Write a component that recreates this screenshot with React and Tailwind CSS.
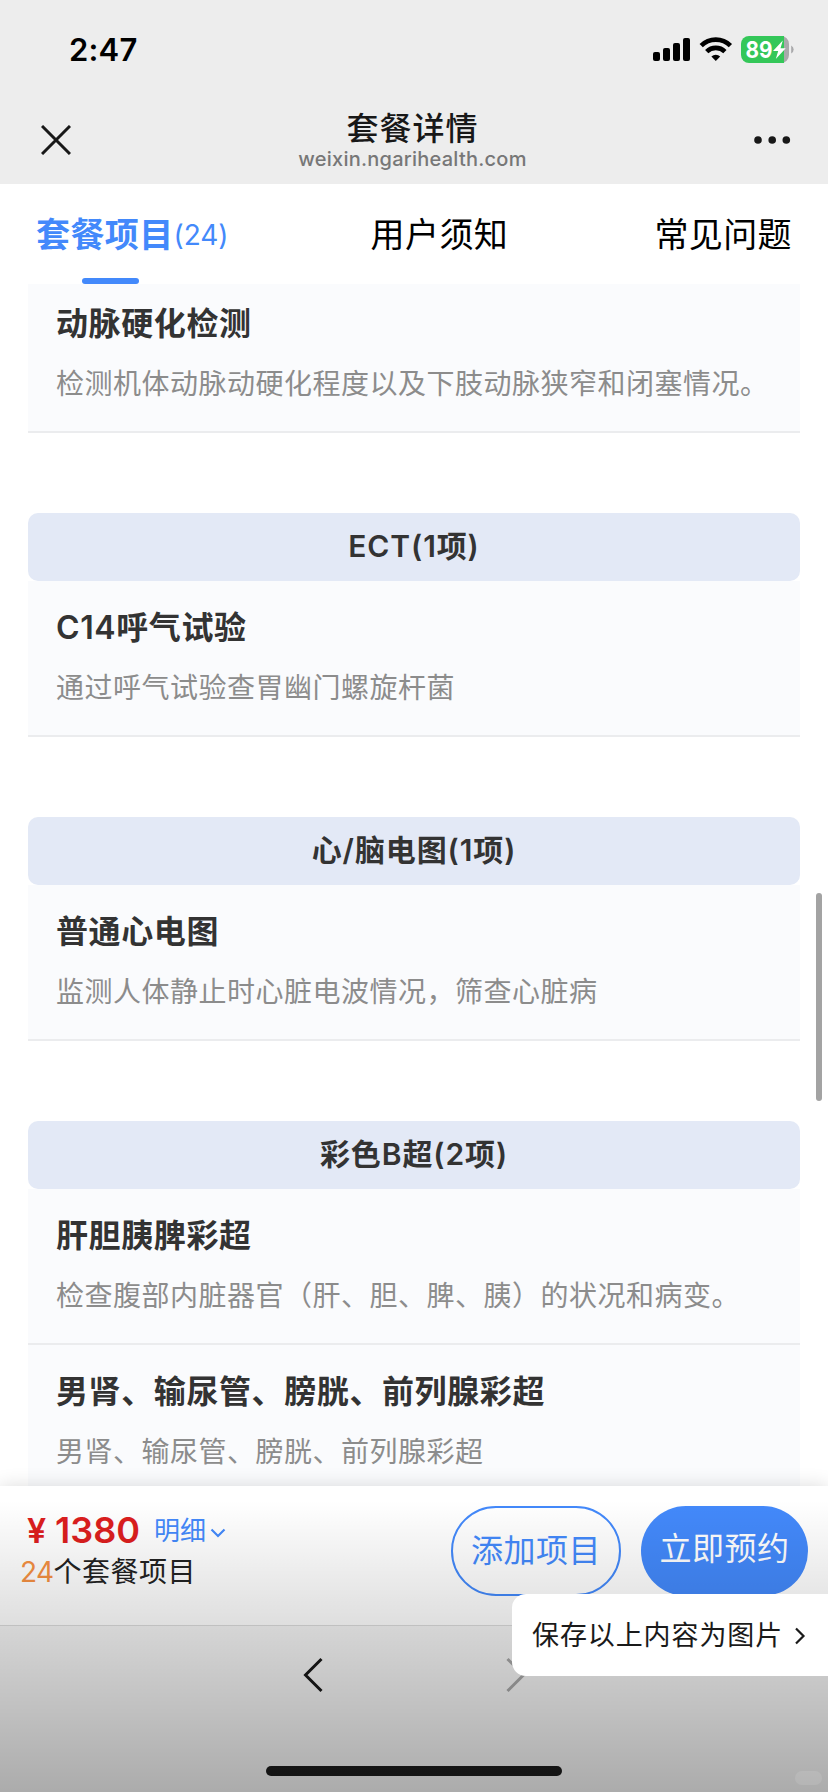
import { clsx } from 'clsx'

const sections = [
  { title: null, items: [{ name: '动脉硬化检测', desc: '检测机体动脉动硬化程度以及下肢动脉狭窄和闭塞情况。' }] },
  { title: 'ECT(1项)', items: [{ name: 'C14呼气试验', desc: '通过呼气试验查胃幽门螺旋杆菌' }] },
  { title: '心/脑电图(1项)', items: [{ name: '普通心电图', desc: '监测人体静止时心脏电波情况，筛查心脏病' }] },
  {
    title: '彩色B超(2项)',
    items: [
      { name: '肝胆胰脾彩超', desc: '检查腹部内脏器官（肝、胆、脾、胰）的状况和病变。' },
      { name: '男肾、输尿管、膀胱、前列腺彩超', desc: '男肾、输尿管、膀胱、前列腺彩超' },
    ],
  },
]

function StatusIcons() {
  return (
    <svg width="142" height="28" viewBox="0 0 142 28" className="shrink-0">
      {/* signal */}
      <rect x="0" y="16" width="7" height="9" rx="2" />
      <rect x="10" y="12" width="7" height="13" rx="2" />
      <rect x="20" y="7" width="7" height="18" rx="2" />
      <rect x="30" y="2" width="7" height="23" rx="2" />
      {/* wifi */}
      <g fill="none" stroke="#000" strokeWidth="4.6">
        <path d="M48.2 9.7a20.5 20.5 0 0 1 29.2 0" />
        <path d="M53.7 15.6a13 13 0 0 1 18.2 0" />
      </g>
      <path d="M62.8 25l-4.4-4.4a6.4 6.4 0 0 1 8.8 0z" />
      {/* battery */}
      <path d="M96 0h32a8 8 0 0 1 8 8v11a8 8 0 0 1-8 8h-5V0z" fill="#a9a9ab" />
      <path d="M96 0h35v27H96a8 8 0 0 1-8-8V8a8 8 0 0 1 8-8z" fill="#34c759" />
      <path d="M138.2 9.5a4.500 4.500 0 0 1 0 8z" fill="#a9a9ab" />
      <text x="92.5" y="22" fill="#fff" fontSize="23" fontWeight="700" fontFamily="Inter, sans-serif" textLength="27" lengthAdjust="spacingAndGlyphs">89</text>
      <path d="M129.8 4.500l-9.800 10.500h5.200l-2.400 8 9.900-10.800h-5.200z" fill="#fff" />
    </svg>
  )
}

function Tab({ label, active, count }) {
  return (
    <div className={clsx('flex items-center text-[34px] tracking-[0.4px] leading-[100px]', active ? 'text-[#4389fb] font-bold' : 'text-black')}>
      {label}
      {count && <span className="text-[28px] font-normal tracking-[-0.1px]">({count})</span>}
    </div>
  )
}

function Item({ name, desc }) {
  return (
    <div className="h-[156px] bg-[#fafbfd] border-b-2 border-[#ebecee] px-7 pt-[27px] whitespace-nowrap">
      <div className="text-[32px] leading-10 tracking-[0.6px] font-semibold text-[#333]">{name}</div>
      <div className="mt-5 text-[28px] leading-10 tracking-[0.5px] text-[#8c8c8c]">{desc}</div>
    </div>
  )
}

export default function App() {
  return (
    <div className="relative w-[828px] h-[1792px] overflow-hidden flex flex-col bg-white font-['Inter','Noto_Sans_CJK_SC',sans-serif]">
      {/* Status bar + nav */}
      <header className="h-[184px] shrink-0 bg-[#ededed]">
        <div className="h-[100px] flex items-center justify-between pl-[69px] pr-[33px]">
          <span className="text-[31px] tracking-[0.2px] font-semibold text-black">2:47</span>
          <StatusIcons />
        </div>
        <div className="h-[84px] flex items-start justify-between pl-[41px] pr-[37px]">
          <svg width="30" height="30" viewBox="0 0 30 30" className="mt-[25px]" stroke="#181818" strokeWidth="3">
            <path d="M1 1l28 28M29 1L1 29" />
          </svg>
          <div className="flex flex-col items-center pt-[9px]">
            <div className="text-[32px] leading-10 tracking-[1px] font-medium text-[#181818]">套餐详情</div>
            <div className="-mt-0.5 text-[20px] leading-6 tracking-[0.24px] font-medium text-[#777]">weixin.ngarihealth.com</div>
          </div>
          <svg width="37" height="10" viewBox="0 0 37 10" className="mt-[35px]" fill="#181818">
            <circle cx="4" cy="5" r="3.8" />
            <circle cx="18.2" cy="5" r="3.8" />
            <circle cx="32.3" cy="5" r="3.8" />
          </svg>
        </div>
      </header>

      {/* Tabs */}
      <nav className="relative h-[100px] shrink-0 flex justify-between pt-px pl-9 pr-9">
        <Tab label="套餐项目" active count="24" />
        <div className="-ml-1">
          <Tab label="用户须知" />
        </div>
        <Tab label="常见问题" />
        <div className="absolute left-[82px] bottom-0 w-[57px] h-1.5 rounded-full bg-[#4389fb]" />
      </nav>

      {/* Package items */}
      <main className="h-[1202px] shrink-0 overflow-hidden px-7 flex flex-col gap-20">
        {sections.map((s, i) => (
          <section key={i} className={clsx('shrink-0', !s.title && '-mt-[7px]')}>
            {s.title && (
              <h3 className="h-[68px] rounded-[10px] bg-[#e3e9f6] text-center text-[30px] leading-[67px] tracking-[0.9px] font-semibold text-[#333]">
                {s.title}
              </h3>
            )}
            {s.items.map(it => <Item key={it.name} {...it} />)}
          </section>
        ))}
      </main>

      {/* Order bar */}
      <div className="h-[139px] shrink-0 bg-white flex justify-between pl-5 pr-5 pt-5 shadow-[0_0_18px_rgba(0,0,0,0.14)]">
        <div className="pt-1">
          <div className="flex items-center h-10 pl-[7px]">
            <span className="text-[36px] font-semibold text-[#dc1e1e]">
              <span className="inline-block w-[28px] text-[34px]">¥</span>1380
            </span>
            <span className="ml-3.5 text-[26px] text-[#4389fb]">明细</span>
            <svg width="16" height="10" viewBox="0 0 16 10" className="ml-1 mt-1.5" fill="none" stroke="#4389fb" strokeWidth="2.2">
              <path d="M1.5 1.5L8 8l6.5-6.5" />
            </svg>
          </div>
          <div className="mt-0.5 text-[28px] leading-10 tracking-[0.5px] text-[#222]">
            <span className="text-[#f59042] tracking-[-0.6px]">24</span>个套餐项目
          </div>
        </div>
        <div className="flex gap-5">
          <button className="w-[170px] h-[90px] rounded-full border-2 border-[#4389fb] text-[32px] text-[#4389fb] tracking-[0.5px]">添加项目</button>
          <button className="w-[167px] h-[90px] rounded-full bg-[#4389fb] text-[32px] text-white tracking-[0.5px] pb-1">立即预约</button>
        </div>
      </div>

      {/* Browser toolbar */}
      <footer className="h-[167px] shrink-0 bg-[#f5f5f5] border-t border-[#dcdcdc] flex flex-col items-center justify-between pb-4">
        <div className="w-full flex justify-between pl-[303px] pr-[302px] pt-[31px]">
          <svg width="20" height="36" viewBox="0 0 20 36" fill="none" stroke="#181818" strokeWidth="3">
            <path d="M18.5 2L2.5 18l16 16" />
          </svg>
          <svg width="20" height="36" viewBox="0 0 20 36" fill="none" stroke="#a8a8a8" strokeWidth="3">
            <path d="M1.5 2l16 16-16 16" />
          </svg>
        </div>
        <div className="w-[296px] h-2.5 rounded-full bg-[#1c1c1c]" />
      </footer>

      {/* Bottom shade */}
      <div className="absolute inset-x-0 bottom-0 h-[292px] bg-linear-to-b from-black/0 to-black/30 pointer-events-none" />

      {/* Scroll thumb */}
      <div className="absolute right-1.5 top-[893px] w-1.5 h-[208px] rounded-full bg-[#a3a3a3]" />

      {/* Save as image */}
      <button className="absolute right-0 top-[1594px] w-[316px] h-[82px] rounded-l-[14px] bg-white flex items-center pt-0.5 pl-5 text-[27px] tracking-[0.9px] text-[#1a1a1a] whitespace-nowrap">
        保存以上内容为图片
        <svg width="12" height="18" viewBox="0 0 12 18" className="ml-[11px]" fill="none" stroke="#1a1a1a" strokeWidth="2.2">
          <path d="M2 1.5L9.5 9 2 16.5" />
        </svg>
      </button>

      <div className="absolute right-1.5 bottom-[7px] w-[27px] h-3.5 rounded-full bg-white/10" />
    </div>
  )
}
